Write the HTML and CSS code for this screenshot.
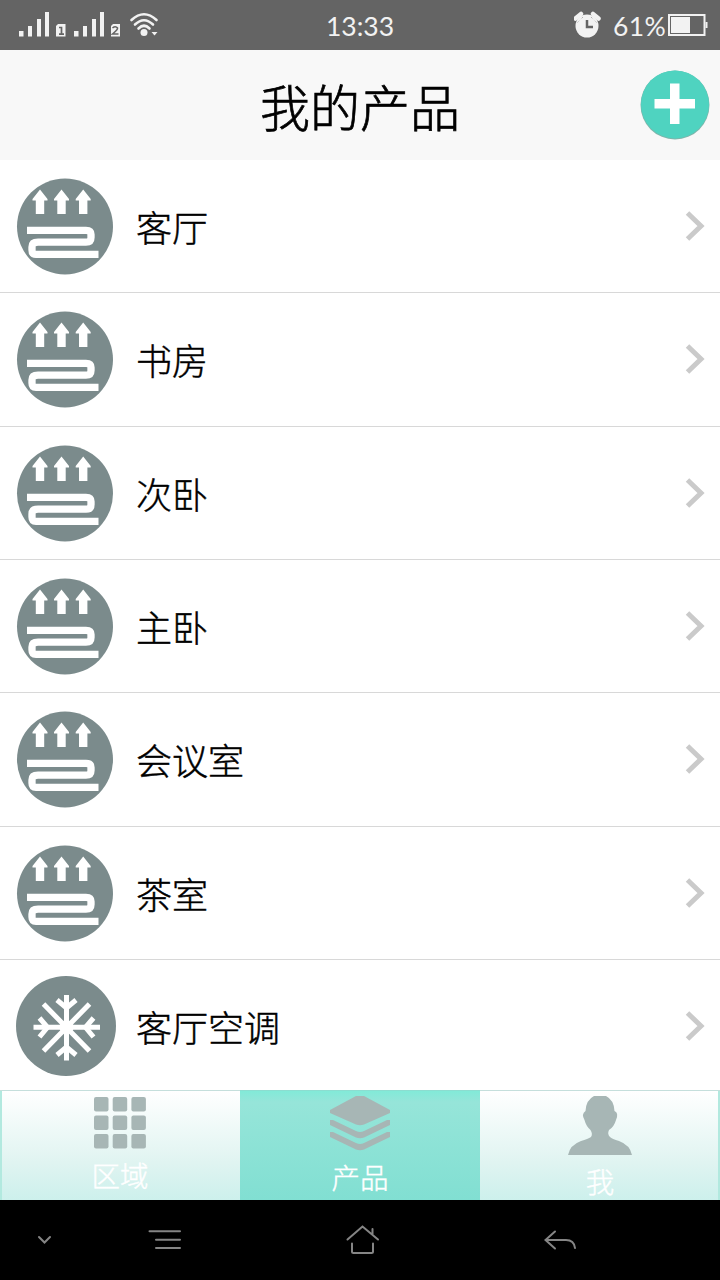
FILE: index.html
```html
<!DOCTYPE html>
<html lang="zh-CN">
<head>
<meta charset="utf-8">
<title>我的产品</title>
<link rel="stylesheet" href="styles.css">
</head>
<body>
<svg class="defs" width="0" height="0">
  <symbol id="heating" viewBox="16 176 100 100">
    <circle cx="65" cy="226.5" r="48" fill="#7b8b8c"/>
    <g fill="#fff">
      <path id="arrow" d="M40 189.500l7.500 9.500v1.500h-3.300v13.500h-8.400v-13.500h-3.300v-1.500z"/>
      <use href="#arrow" x="21.5"/>
      <use href="#arrow" x="43.2"/>
    </g>
    <path d="M27 230.300H86Q91 230.300 91 234.500V237.500Q91 242.200 86 242.200H38Q32 242.200 32 247V250Q32 254.300 36 254.300H98.500" fill="none" stroke="#fff" stroke-width="7.300"/>
  </symbol>
  <symbol id="snow" viewBox="0 0 100 100">
    <circle cx="50" cy="50" r="50" fill="#7b8b8c"/>
    <g fill="none" stroke="#fff" stroke-width="5">
      <path d="M50.500 19V84.500M17.500 51.300H84"/>
      <path d="M27.500 28L73.500 75M73.500 28L27.500 75"/>
      <path d="M41 24L50.500 32L60 24M41 79L50.500 71L60 79M23.500 42L31.500 51.300L23.500 61M77.500 42L69.500 51.300L77.500 61"/>
    </g>
    <circle cx="50.500" cy="51.300" r="7" fill="#fff"/>
  </symbol>
  <symbol id="chevron" viewBox="0 0 22 32">
    <path d="M2.500 3L16 16L2.500 29" fill="none" stroke="#cacaca" stroke-width="5"/>
  </symbol>
</svg>
<main class="screen">
  <header class="status">
    <svg class="signals" width="150" height="50" viewBox="0 0 150 50" fill="#f2f2f2">
      <path id="bars" d="M19 31h4.500v5.500H19zM28 26h4v10.500h-4zM37 19h4v17.500h-4zM45 12h4v24.500h-4z"/>
      <use href="#bars" x="55"/>
      <path d="M58 24h7.500v12.500H56V26z"/><path d="M59 27.500h2.500V34M59 34.200h5" fill="none" stroke="#646464" stroke-width="1.700"/>
      <path d="M113 24h7v12.500h-9V26z"/><path d="M112.500 28q3-2.500 5 0q.5 1.500-5 6h6" fill="none" stroke="#646464" stroke-width="1.600"/>
      <g transform="translate(130 0)"><g fill="none" stroke="#f2f2f2" stroke-width="2.600" stroke-linecap="round"><path d="M1.500 20Q14 8.500 26.500 20M5 24.500Q14 16 23 24.500M8.500 28.500Q14 23 19.500 28.500"/></g><circle cx="14" cy="32.500" r="3.500"/><path d="M21.500 32h6l-3 3.500z"/></g>
    </svg>
    <span class="clock">13:33</span>
    <div class="power">
      <svg width="28" height="28" viewBox="0 0 28 28"><circle cx="13" cy="15" r="11.500" fill="#f2f2f2"/><path d="M1.500 7.500L7 3M24.500 7.500L19 3" fill="none" stroke="#f2f2f2" stroke-width="4.500" stroke-linecap="round"/><path d="M4 11.500L9 6M22 11.500L17 6" stroke="#646464" stroke-width="1"/><circle cx="13" cy="15.300" r="10" fill="#f2f2f2"/><path d="M13 9v7h6" fill="none" stroke="#646464" stroke-width="2.500"/></svg>
      <span class="percent">61%</span>
      <svg width="40" height="24" viewBox="0 0 40 24"><path d="M1 2H36.500V22H1Z" fill="none" stroke="#f2f2f2" stroke-width="2"/><path d="M3 4H22V20H3zM37.500 9H39.500V15H37.500z" fill="#f2f2f2"/></svg>
    </div>
  </header>
  <div class="titlebar">
    <h1 class="title">我的产品</h1>
    <svg class="add" width="70" height="70" viewBox="0 0 70 70"><circle cx="35" cy="35" r="34.500" fill="#7fb5ab"/><circle cx="35" cy="34.400" r="34" fill="#4fd3c0"/><path d="M30 13.500h9.500V29H55v9.500H39.500V54H30V38.500H14.500V29H30z" fill="#fff"/></svg>
  </div>
  <div class="list">
    <div class="row"><svg class="device"><use href="#heating"/></svg><span class="name">客厅</span><svg class="chevron"><use href="#chevron"/></svg></div>
    <div class="row"><svg class="device"><use href="#heating"/></svg><span class="name">书房</span><svg class="chevron"><use href="#chevron"/></svg></div>
    <div class="row"><svg class="device"><use href="#heating"/></svg><span class="name">次卧</span><svg class="chevron"><use href="#chevron"/></svg></div>
    <div class="row"><svg class="device"><use href="#heating"/></svg><span class="name">主卧</span><svg class="chevron"><use href="#chevron"/></svg></div>
    <div class="row"><svg class="device"><use href="#heating"/></svg><span class="name">会议室</span><svg class="chevron"><use href="#chevron"/></svg></div>
    <div class="row"><svg class="device"><use href="#heating"/></svg><span class="name">茶室</span><svg class="chevron"><use href="#chevron"/></svg></div>
    <div class="row"><svg class="device"><use href="#snow"/></svg><span class="name">客厅空调</span><svg class="chevron"><use href="#chevron"/></svg></div>
  </div>
  <nav class="tabs">
    <div class="tab tab-area">
      <svg width="52" height="52" viewBox="0 0 52 52" fill="#a7b6b5"><g id="squares"><rect width="14.500" height="14.500" rx="2"/><rect x="18.700" width="14.500" height="14.500" rx="2"/><rect x="37.400" width="14.500" height="14.500" rx="2"/></g><use href="#squares" y="18.500"/><use href="#squares" y="37"/></svg>
      <span class="label">区域</span>
    </div>
    <div class="tab tab-products">
      <svg width="60" height="55" viewBox="0 0 60 55" fill="#a7b6b5"><path d="M26 0H34L60 14V17L34 28.500Q30 30 26 28.500L0 17V14z"/><path id="layer" d="M0 24H3L26 35Q30 37 34 35L57 24H60V29L34 41.500Q30 43 26 41.500L0 29z"/><use href="#layer" y="12"/></svg>
      <span class="label">产品</span>
    </div>
    <div class="tab tab-me">
      <svg width="64" height="59" viewBox="0 0 64 59"><path d="M26 0H38Q46 4 46.500 15Q51 17 48 24Q46 31 41 34Q39 38 42 41Q44 43 51 45Q62 49 64 59H0Q2 49 13 45Q20 43 23 41Q25 38 22.500 34Q18 30 16.500 24Q13 18 17.500 15Q18 4 26 0z" fill="#a7b6b5"/></svg>
      <span class="label">我</span>
    </div>
  </nav>
  <footer class="system">
    <svg width="720" height="80" viewBox="0 0 720 80" fill="none" stroke="#858585" stroke-width="2" stroke-linecap="round"><path d="M39 37l5.500 5.500L50 37"/><path d="M149.500 31.300H180M156 39.700H180M156 48H180"/><path d="M347.500 39.500L362.500 26.500L378 39.500M372.500 34V29M352 43.500V51.500Q352 53 353.500 53H371.500Q373 53 373 51.500V43.500"/><path d="M555 31.500L545.500 40L555 48.500M546 40H566Q574 40 575 48"/></svg>
  </footer>
</main>
</body>
</html>
```
FILE: styles.css
```css
* { box-sizing: border-box; }
body { margin: 0; background: #fff; font-family: "Noto Sans CJK SC", sans-serif; font-weight: 300; }
svg { display: block; flex: none; }
.defs { position: absolute; }
.screen { width: 720px; height: 1280px; display: flex; flex-direction: column; overflow: hidden; }
.status { height: 50px; flex: none; background: #646464; color: #f2f2f2; display: grid; grid-template-columns: 1fr 70px 1fr; align-items: center; font: 400 26.5px/48px Lato, sans-serif; }
.signals { overflow: visible; }
.clock { text-align: center; white-space: nowrap; padding-top: 2px; }
.power { display: flex; align-items: center; justify-content: flex-end; padding-right: 12px; white-space: nowrap; }
.percent { padding: 2px 2px 0 11px; letter-spacing: .3px; }
.titlebar { height: 110px; flex: none; background: #f8f8f8; display: grid; grid-template-columns: 80px 1fr 80px; align-items: center; }
.title { grid-column: 2; margin: 0; text-align: center; font-size: 50px; font-weight: 300; line-height: 110px; -webkit-text-stroke: .7px #000; }
.list { height: 930px; flex: none; overflow: hidden; }
.row { height: 133.33px; display: flex; align-items: center; padding: 0 13px 0 16px; border-bottom: 1px solid #d8d8d8; }
.device { width: 100px; height: 100px; }
.name { flex: 1; padding-left: 20px; font-size: 36px; line-height: 52px; color: #000; -webkit-text-stroke: .45px #000; }
.chevron { width: 22px; height: 32px; }
.tabs { height: 110px; flex: none; display: grid; grid-template-columns: repeat(3, 1fr); }
.tab { display: flex; flex-direction: column; align-items: center; padding-top: 6px; border-top: 1px solid #c5dfdc; background: linear-gradient(#fff, #e0f4f1 65%, #ccf0ec); }
.tab-area { box-shadow: inset 2px 0 #b2e9df; }
.tab-me { box-shadow: inset -2px 0 #b2e9df; padding-top: 5px; }
.tab-products { background: linear-gradient(#82ead8 0, #96e5d9 10%, #81dfd2); padding-top: 5px; border-top-color: #8cddd0; }
.label { color: #fff; font-size: 28.5px; line-height: 40px; margin-top: 6px; -webkit-text-stroke: .4px #fff; }
.system { height: 80px; flex: none; background: #000; }
```
